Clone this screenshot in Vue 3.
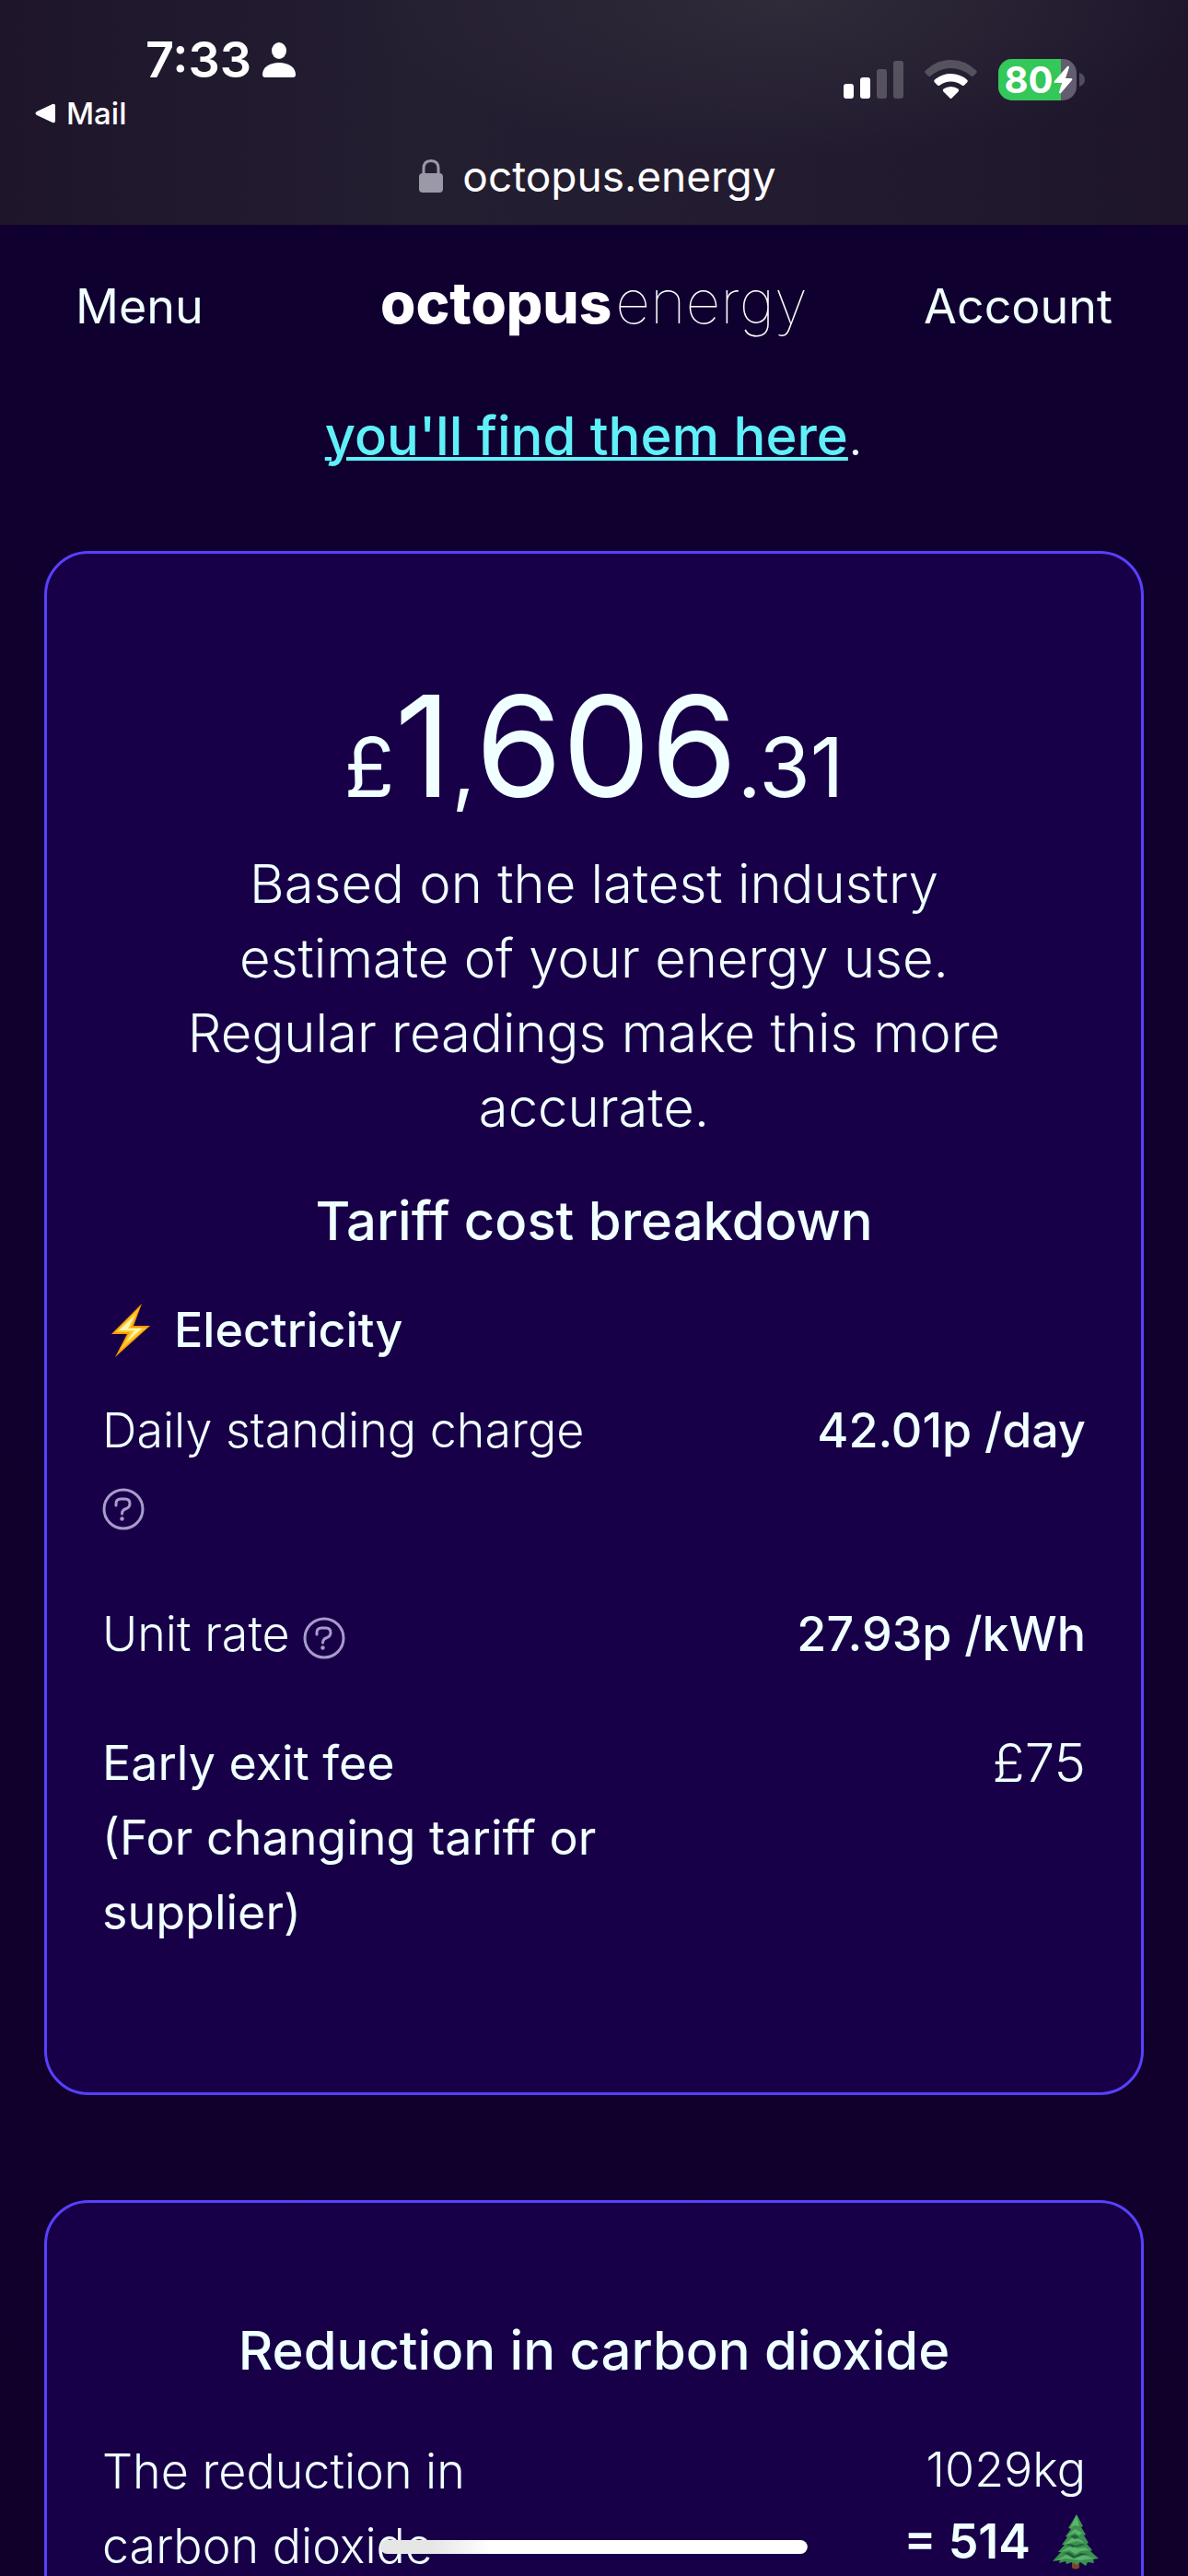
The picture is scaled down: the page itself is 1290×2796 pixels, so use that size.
<script setup>
const rates = [
  { label: 'Daily standing charge', value: '42.01p /day' },
  { label: 'Unit rate', value: '27.93p /kWh' },
]
</script>

<template>
  <div class="screen">
    <header class="browser">
      <div class="status">
        <div class="status-left">
          <div class="clock">
            <span>7:33</span>
            <svg width="36" height="38" viewBox="0 0 36 38" fill="#fff" aria-hidden="true">
              <ellipse cx="18" cy="9" rx="8" ry="9" />
              <path d="M3 38Q0 38 0 35C0 27 8 22 18 22S36 27 36 35Q36 38 33 38Z" />
            </svg>
          </div>
          <button class="back" type="button">
            <svg width="22" height="22" viewBox="0 0 22 22" fill="#fff" aria-hidden="true">
              <path d="M19 1Q22 0 22 3V19Q22 22 19 21L2 13Q-1 11 2 9Z" />
            </svg>
            Mail
          </button>
        </div>
        <div class="status-right">
          <svg width="65" height="45" viewBox="0 0 65 45" fill="#fff" role="img" aria-label="Signal">
            <rect x="0" y="27" width="11" height="16" rx="3" />
            <rect x="18" y="20" width="11" height="23" rx="3" />
            <rect x="36" y="11" width="11" height="32" rx="3" opacity=".22" />
            <rect x="54" y="2" width="11" height="41" rx="3" opacity=".22" />
          </svg>
          <svg width="57" height="45" viewBox="0 0 57 45" fill="#fff" role="img" aria-label="Wi-Fi">
            <path opacity=".22" d="M1 12.500Q12.500 1 28.500 1T56 12.500Q57.500 14 56 15.500L53 18.500Q52 19.500 50.500 18.500Q40.500 10 28.500 10T6.500 18.500Q5 19.500 4 18.500L1 15.500Q-.5 14 1 12.500Z" />
            <path d="M11 22.500Q18.500 16 28.500 16T46 22.500Q47.500 24 46 25.500L43 28.500Q42 29.500 40.500 28.500Q35 24.500 28.500 24.500T16.500 28.500Q15 29.500 14 28.500L11 25.500Q9.500 24 11 22.500Z" />
            <path d="M20.500 32.500Q24 30 28.500 30T36.500 32.500Q38 34 36.500 35.500L29.500 42.500Q28.500 43.500 27.500 42.500L20.500 35.500Q19 34 20.500 32.500Z" />
          </svg>
          <svg class="battery" width="95" height="45" viewBox="0 0 95 45" role="img" aria-label="Battery 80 percent, charging">
            <defs>
              <clipPath id="battery-body"><rect width="85" height="45" rx="15" /></clipPath>
            </defs>
            <g clip-path="url(#battery-body)">
              <rect width="85" height="45" fill="#635d70" />
              <rect width="68" height="45" fill="#34c759" />
            </g>
            <path d="M88 15Q94 17 94 22.500T88 30Z" fill="#524d5e" />
            <text class="battery-level" x="33" y="37" text-anchor="middle">80</text>
            <path d="M75 8L61 24Q60 26 62 26H69L66 36Q66 38 68 37L80 23Q81 21 79 21H73L77 9Q77 7 75 8Z" fill="#fff" />
          </svg>
        </div>
      </div>
      <div class="address">
        <svg width="26" height="36" viewBox="0 0 26 36" aria-hidden="true">
          <path d="M5 17V10C5 4 8 1.500 13 1.500S21 4 21 10V17" fill="none" stroke="#9b98a8" stroke-width="3" />
          <rect y="15" width="26" height="21" rx="4" fill="#9b98a8" />
        </svg>
        <span>octopus.energy</span>
      </div>
    </header>

    <main class="page">
      <nav class="nav">
        <button class="nav-item" type="button">Menu</button>
        <a class="logo" href="#"><b>octopus</b><span>energy</span></a>
        <a class="nav-item nav-end" href="#">Account</a>
      </nav>

      <p class="find"><a href="#">you'll find them here</a>.</p>

      <section class="card">
        <p class="price"><small>£</small>1<small>,</small>606<small>.31</small></p>
        <p class="note">
          Based on the latest industry estimate of your energy use. Regular readings make this more
          accurate.
        </p>
        <h2>Tariff cost breakdown</h2>
        <h3>
          <svg width="54" height="60" viewBox="-4 0 54 60" aria-hidden="true">
            <path d="M39 1L6 34H23L10 59L48 25H30Z" fill="#f79a0b" />
            <path d="M36 6L10 32H26L15 52L44 27H27Z" fill="#ffc928" />
            <path d="M32 13L14 30H31L22 43L39 28H24Z" fill="#fff6b4" />
          </svg>
          Electricity
        </h3>
        <dl class="rates">
          <div v-for="rate in rates" :key="rate.label" class="row">
            <dt>
              {{ rate.label }}
              <button class="help" type="button" :aria-label="`About ${rate.label}`">
                <svg width="46" height="46" viewBox="0 0 46 46" fill="none" stroke="#a79ccb" aria-hidden="true">
                  <circle cx="23" cy="23" r="21" stroke-width="3" />
                  <path d="M15 19V17Q15 12 20 12H25Q30 12 30 17Q30 21 26 22.500Q21.500 24 21.500 28" stroke-width="3" stroke-linecap="round" />
                  <circle cx="21.500" cy="33.500" r="2.200" fill="#a79ccb" stroke="none" />
                </svg>
              </button>
            </dt>
            <dd class="strong">{{ rate.value }}</dd>
          </div>
          <div class="row">
            <dt class="medium">Early exit fee<br />(For changing tariff or supplier)</dt>
            <dd class="fee">£75</dd>
          </div>
        </dl>
      </section>

      <section class="card carbon">
        <h2>Reduction in carbon dioxide</h2>
        <dl class="rates">
          <div class="row">
            <dt>The reduction in carbon dioxide</dt>
            <dd class="saving">
              <span>1029kg</span>
              <span class="trees">
                = 514
                <svg width="50" height="60" viewBox="0 0 50 60" role="img" aria-label="trees">
                  <path d="M21 48H29V58Q25 61 21 58Z" fill="#7b4524" />
                  <path d="M26 0L33 13L31 14L36 22L34 23L39 31L37 32L43 39L41 40L50 48L44 49L45 53L38 52L36 56L30 52L26 55L21 52L15 54L14 51L7 53L8 50L0 51L9 41L6 41L13 33L10 33L16 25L14 24L20 16L17 15Z" fill="#3c9150" />
                  <path d="M26 1L29 13L24 12L19 15ZM24 16L32 20L29 23L24 20L16 24ZM22 25L31 28L34 31L26 29L20 31L12 33ZM20 34L27 37L35 36L40 39L30 40L25 43L18 39L8 41ZM17 43L24 47L32 44L46 48L35 49L30 50L22 49L15 48L4 50Z" fill="#5cb56c" />
                  <path d="M19 24L24 22L29 25L24 27ZM14 33L20 32L25 34L31 32L36 33L28 35L22 36ZM12 42L18 41L24 45L30 42L39 43L31 45L23 48Z" fill="#20633a" />
                </svg>
              </span>
            </dd>
          </div>
        </dl>
      </section>
    </main>
    <div class="home-bar"></div>
  </div>
</template>

<style>
body {
  margin: 0;
  background: #100030;
}
</style>

<style scoped>
.screen {
  position: relative;
  display: flex;
  flex-direction: column;
  height: 100vh;
  overflow: hidden;
  background: linear-gradient(#100030, #10002a);
  color: #f0ffff;
  font-family: Inter, "Liberation Sans", sans-serif;
  font-size: 52px;
  line-height: 81px;
}

p, h2, h3, dl, dd {
  margin: 0;
}

svg {
  flex: none;
}

button {
  padding: 0;
  border: 0;
  background: none;
  color: inherit;
  font: inherit;
  cursor: pointer;
}

a {
  color: inherit;
  text-decoration: none;
}

.browser {
  flex: none;
  padding: 35px 0 23px;
  background:
    radial-gradient(ellipse 460px 170px at 66% 0, #2f2b38, transparent),
    linear-gradient(90deg, #1e152b, #241e31 35%, #231c31 65%, #1e152b);
  color: #fff;
}

.status {
  display: flex;
  justify-content: space-between;
  padding: 0 111px 0 38px;
}

.status-left {
  display: flex;
  flex-direction: column;
  align-items: flex-start;
  gap: 8px;
}

.clock {
  display: flex;
  align-items: center;
  gap: 12px;
  padding-left: 120px;
  font-size: 54px;
  font-weight: 600;
  line-height: 60px;
}

.back {
  display: flex;
  align-items: center;
  gap: 12px;
  font-size: 33px;
  font-weight: 500;
  line-height: 40px;
}

.status-right {
  display: flex;
  align-items: flex-start;
  gap: 23px;
  padding-top: 29px;
}

.battery {
  overflow: visible;
}

.battery-level {
  fill: #fff;
  font-size: 40px;
  font-weight: 700;
}

.address {
  display: flex;
  align-items: center;
  justify-content: center;
  gap: 21px;
  margin-top: 18px;
  padding-left: 8px;
  font-size: 46px;
  line-height: 60px;
}

.page {
  flex: 1;
  min-height: 0;
  padding: 48px 48px 0;
}

.nav {
  display: grid;
  grid-template-columns: 1fr auto 1fr;
  align-items: baseline;
  padding: 0 34px;
}

.nav-item {
  justify-self: start;
}

.nav-end {
  justify-self: end;
}

.logo {
  display: flex;
  align-items: baseline;
  gap: 4px;
  color: #fff;
  line-height: 60px;
}

.logo b {
  font-size: 62px;
  font-weight: 800;
}

.logo span {
  font-size: 66px;
  font-weight: 100;
}

.find {
  margin: 60px 0 84px;
  font-size: 58px;
  font-weight: 300;
  text-align: center;
}

.find a {
  color: #60f0f8;
  font-weight: 500;
  text-decoration: underline;
  text-decoration-thickness: 4px;
}

.card {
  padding: 136px 60px 155px;
  border: 3px solid #5840ff;
  border-radius: 48px;
  background: #180048;
}

.carbon {
  margin-top: 114px;
  padding-top: 120px;
}

.price {
  font-size: 152px;
  line-height: 146px;
  text-align: center;
}

.price small {
  font-size: 90px;
  line-height: 60px;
}

.note {
  margin-top: 36px;
  padding: 0 60px;
  font-size: 58px;
  font-weight: 300;
  text-align: center;
}

h2 {
  margin-top: 42px;
  font-size: 58px;
  font-weight: 500;
  text-align: center;
}

.carbon h2 {
  margin: 0 0 50px;
}

h3 {
  display: flex;
  align-items: center;
  gap: 24px;
  margin: 37px 0 28px;
  font-size: 52px;
  font-weight: 500;
}

.rates {
  display: flex;
  flex-direction: column;
  gap: 59px;
}

.row {
  display: flex;
  justify-content: space-between;
}

dt {
  flex: 0 1 53%;
  font-weight: 300;
}

.medium {
  font-weight: 400;
}

.help {
  display: inline-flex;
  vertical-align: middle;
}

dd {
  text-align: right;
}

.strong {
  font-weight: 500;
}

.fee {
  font-size: 58px;
  font-weight: 300;
}

.saving {
  display: flex;
  flex-direction: column;
  align-items: flex-end;
  font-weight: 300;
  line-height: 78px;
}

.trees {
  display: flex;
  align-items: center;
  gap: 24px;
  margin-right: -14px;
  font-weight: 600;
}

.home-bar {
  position: absolute;
  bottom: 24px;
  left: 50%;
  width: 36%;
  height: 15px;
  border-radius: 8px;
  background: linear-gradient(90deg, #e6e6e6 12%, #fff 26%);
  transform: translateX(-50%);
}
</style>
